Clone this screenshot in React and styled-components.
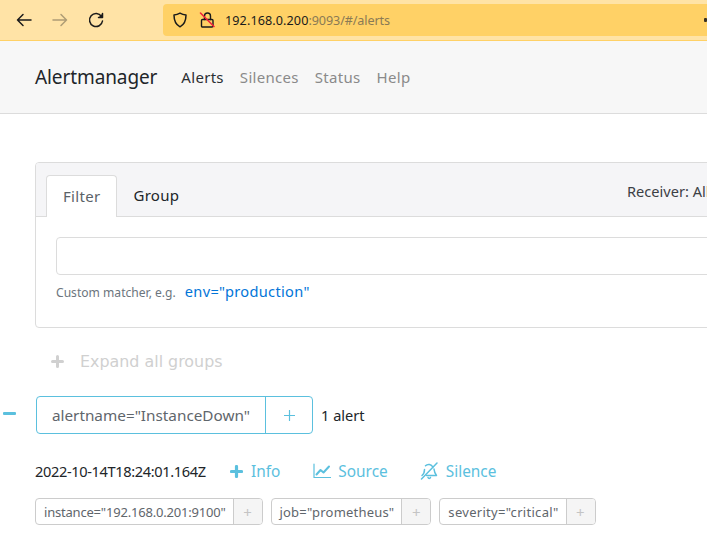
import React from "react";
import styled, { createGlobalStyle } from "styled-components";

const Global = createGlobalStyle`
  html, body { margin: 0; padding: 0; width: 707px; height: 537px; overflow: hidden; background: #fff; }
  body { font-family: "Noto Sans", "Open Sans", sans-serif; color: #212529; }
  * { box-sizing: border-box; }
`;
const font = `"Noto Sans", sans-serif`;

const Page = styled.div`width: 1100px; height: 537px; overflow: hidden;`;
const Chrome = styled.div`
  height: 41px; background: #ffe3a6; border-bottom: 1px solid #ffd166;
  display: flex; align-items: center; padding-left: 15px;
`;
const NavBtn = styled.span`
  width: 18px; height: 18px; margin-right: 18px; display: flex;
  opacity: ${p => (p.$dim ? 0.35 : 1)};
  svg { display: block; }
`;
const UrlBar = styled.div`
  margin-left: 40px; width: 560px; height: 32px; background: #ffd166; border-radius: 4px;
  display: flex; align-items: center; padding: 0 16px 0 8px; gap: 8px;
  font: 12.6px ${font}; letter-spacing: -0.3px;
`;
const UrlIcons = styled.div`display: flex; gap: 10px; align-items: center;`;
const UrlEnd = styled.span`margin-left: auto; width: 3px; height: 4px; border-radius: 1px; background: #3a3020;`;
const Host = styled.span`color: #1b1b1b; letter-spacing: 0.1px;`;
const Rest = styled.span`color: #8a7a55; letter-spacing: -0.1px;`;

const Navbar = styled.div`
  height: 73px; background: #f7f7f7; border-bottom: 1px solid #dcdcdc;
  display: flex; align-items: center; padding-left: 35px;
`;
const Brand = styled.div`font: 19px ${font}; color: #212529; letter-spacing: -0.1px; margin-right: 24px;`;
const NavLinks = styled.div`display: flex; gap: 16px;`;
const NavLink = styled.a`font: 15px ${font}; letter-spacing: 0.3px; color: ${p => (p.$active ? "#2c2f33" : "#8a8a8a")};`;

const Content = styled.div`padding: 48px 0 0 35px; width: 1000px;`;
const Card = styled.div`height: 166px; border: 1px solid #dcdcdc; border-radius: 4px; overflow: hidden;`;
const CardHead = styled.div`
  height: 54px; background: #f5f5f7; border-bottom: 1px solid #dcdcdc; display: flex;
  align-items: flex-end; padding-left: 10px; position: relative;
`;
const Tab = styled.div`
  height: 42px; padding: 0 16px; display: flex; align-items: center; font: 15px ${font}; letter-spacing: 0.3px;
  color: ${p => (p.$active ? "#5a6268" : "#212529")};
  ${p => p.$active && `background:#fff; border:1px solid #dcdcdc; border-bottom:0; border-radius:4px 4px 0 0; margin-bottom:-1px; padding:0 16px 2px 16px;`}
`;
const Receiver = styled.div`font: 14.6px ${font}; color: #3c4045; position: absolute; left: 591px; top: 18px;`;
const CardBody = styled.div`padding: 20px;`;
const Input = styled.div`height: 38px; border: 1px solid #dcdcdc; border-radius: 4px; background: #fff;`;
const Hint = styled.div`
  margin-top: 6px; display: flex; align-items: baseline; gap: 9px; font: 12.1px ${font}; color: #6c757d;
`;
const HintCode = styled.span`font: 14.6px ${font}; color: #0275d8; letter-spacing: 0.32px;`;

const Expand = styled.div`
  margin: 21px 0 0 16px; height: 24px; display: flex; align-items: center; gap: 16px;
  color: #d0d0d0; font: 15.9px "DejaVu Sans", sans-serif;
`;
const GroupRow = styled.div`margin-top: 23px; display: flex; align-items: center; position: relative; height: 38px;`;
const Collapse = styled.span`position: absolute; left: -32px; top: 16px; width: 13px; height: 3px; border-radius: 1px; background: #5bc0de;`;
const GroupBtn = styled.div`
  display: flex; margin-left: 1px; height: 38px; border: 1px solid #5bc0de; border-radius: 4px; background: #fff; font: 15.3px ${font}; color: #5f666c;
`;
const GroupName = styled.span`width: 229px; display: flex; align-items: center; justify-content: center; border-right: 1px solid #5bc0de; white-space: nowrap;`;
const GroupPlus = styled.span`width: 46px; display: flex; align-items: center; justify-content: center; color: #5bc0de;`;
const Count = styled.span`margin-left: 8px; font: 14.6px ${font}; color: #212529;`;

const Meta = styled.div`margin-top: 25px; height: 24px; display: flex; align-items: center; font: 15.4px ${font}; color: #212529;`;
const Stamp = styled.span`width: 195px; font-size: 14.6px; letter-spacing: -0.37px; white-space: nowrap;`;
const MetaLink = styled.a`display: flex; align-items: center; gap: ${p => p.$gap || 8}px; color: #5bc0de; margin-right: ${p => p.$after || 32}px; white-space: nowrap; svg { display:block; }`;

const Labels = styled.div`margin-top: 15px; display: flex; gap: 8px;`;
const Label = styled.div`display: flex; height: 27px; border: 1px solid #ccc; border-radius: 4px; font: 13px ${font}; color: #5f666c; letter-spacing: ${p => p.$track}px; overflow: hidden;`;
const LabelText = styled.span`padding: 0 7px 0 8px; display: flex; align-items: center; white-space: nowrap;`;
const LabelPlus = styled.span`width: 29px; background: #f5f5f5; border-left: 1px solid #ccc; color: #c4c4c4; display: flex; align-items: center; justify-content: center; font-size: 15px;`;

const Stroke = ({ children, color = "#1b1b1b", w = 1.5, size = 18, vb = 18 }) => (
  <svg width={size} height={size} viewBox={`0 0 ${vb} ${vb}`} fill="none" stroke={color} strokeWidth={w} strokeLinecap="round" strokeLinejoin="round">{children}</svg>
);

export default function App() {
  return (
    <Page>
      <Global />
      <Chrome>
        <NavBtn><Stroke><path d="M2.5 9H16M8 3.5 2.5 9 8 14.5" /></Stroke></NavBtn>
        <NavBtn $dim><Stroke><path d="M2 9h13.5M10 3.5 15.5 9 10 14.5" /></Stroke></NavBtn>
        <NavBtn><Stroke><path d="M14.5 5.5A6.5 6.5 0 1 0 15.5 10" /><path d="M15.5 2.5v4h-4" fill="#1b1b1b" /></Stroke></NavBtn>
        <UrlBar>
          <UrlIcons>
            <Stroke><path d="M9 2.2c2 1.2 4 1.7 6 1.8 0 5.5-1.5 9.5-6 11.8C4.5 13.5 3 9.5 3 4c2-.1 4-.6 6-1.8Z" /></Stroke>
            <Stroke w={1.4}><rect x="2.5" y="8.5" width="11.5" height="7.5" rx="1" /><path d="M5.5 8.5V5a3 3 0 0 1 6 0v3.5" /><path d="M1.5 2 15 15.5" stroke="#f0213c" strokeWidth="1.6" /></Stroke>
          </UrlIcons>
          <span><Host>192.168.0.200</Host><Rest>:9093/#/alerts</Rest></span>
          <UrlEnd />
        </UrlBar>
      </Chrome>
      <Navbar>
        <Brand>Alertmanager</Brand>
        <NavLinks>
          <NavLink $active>Alerts</NavLink>
          <NavLink>Silences</NavLink>
          <NavLink>Status</NavLink>
          <NavLink>Help</NavLink>
        </NavLinks>
      </Navbar>
      <Content>
        <Card>
          <CardHead>
            <Tab $active>Filter</Tab>
            <Tab>Group</Tab>
            <Receiver>Receiver: All</Receiver>
          </CardHead>
          <CardBody>
            <Input />
            <Hint>Custom matcher, e.g. <HintCode>env="production"</HintCode></Hint>
          </CardBody>
        </Card>
        <Expand>
          <Stroke color="#d0d0d0" w={3} size={13} vb={13}><path d="M6.5 1.5v10M1.5 6.5h10" /></Stroke>
          Expand all groups
        </Expand>
        <GroupRow>
          <Collapse />
          <GroupBtn>
            <GroupName>alertname="InstanceDown"</GroupName>
            <GroupPlus>
              <Stroke color="#5bc0de" w={1.2} size={11} vb={11}><path d="M5.5.5v10M.5 5.5h10" /></Stroke>
            </GroupPlus>
          </GroupBtn>
          <Count>1 alert</Count>
        </GroupRow>
        <Meta>
          <Stamp>2022-10-14T18:24:01.164Z</Stamp>
          <MetaLink $after={33}>
            <Stroke color="#5bc0de" w={3.2} size={13} vb={13}><path d="M6.5 1.5v10M1.5 6.5h10" /></Stroke>
            Info
          </MetaLink>
          <MetaLink $gap={7}>
            <Stroke color="#5bc0de" w={1.5}><path d="M1 2v13.5h17" strokeWidth="1.2" /><path d="M3.5 12.5 7.5 8l3 2.5L16 4.5" strokeWidth="2" /></Stroke>
            Source
          </MetaLink>
          <MetaLink>
            <Stroke color="#5bc0de" w={1.5}><path d="M1.5 17 17 1" /><path d="M5.5 3.8A4.5 4.5 0 0 1 12.8 5M4.5 7.5c0 3-1 4.8-2.5 6M14 7c.3 3 1.3 5 2.5 6.5h-10M8 15.5c.5 1.3 2 1.3 2.5 0" /></Stroke>
            Silence
          </MetaLink>
        </Meta>
        <Labels>
          <Label $track={-0.2}><LabelText>instance="192.168.0.201:9100"</LabelText><LabelPlus>+</LabelPlus></Label>
          <Label $track={0.2}><LabelText>job="prometheus"</LabelText><LabelPlus>+</LabelPlus></Label>
          <Label $track={0.3}><LabelText>severity="critical"</LabelText><LabelPlus>+</LabelPlus></Label>
        </Labels>
      </Content>
    </Page>
  );
}
